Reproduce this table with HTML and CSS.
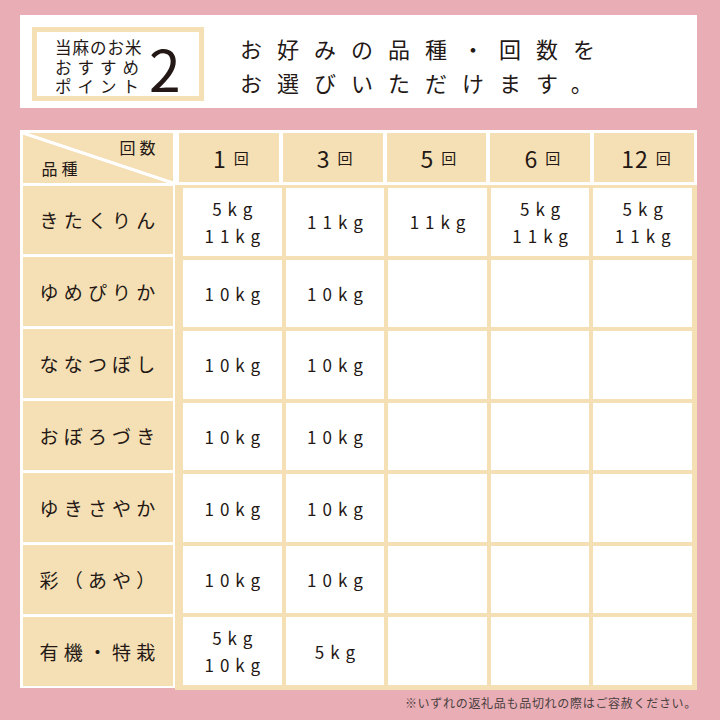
FILE: index.html
```html
<!DOCTYPE html>
<html lang="ja">
<head>
<meta charset="utf-8">
<title>当麻のお米 おすすめポイント2</title>
<link rel="stylesheet" href="styles.css">
</head>
<body>
<div class="page">
  <header class="hero">
    <div class="badge">
      <div class="badge-text">
        <span class="bl bl1">当麻のお米</span>
        <span class="bl bl2">おすすめ</span>
        <span class="bl bl3">ポイント</span>
      </div>
      <span class="badge-num">2</span>
    </div>
    <h1 class="title">お好みの品種・回数を<br>お選びいただけます。</h1>
  </header>

  <div class="table">
    <div class="labels">
      <div class="corner"><span class="c-top">回数</span><span class="c-bot">品種</span></div>
      <div class="label">きたくりん</div>
      <div class="label">ゆめぴりか</div>
      <div class="label">ななつぼし</div>
      <div class="label">おぼろづき</div>
      <div class="label">ゆきさやか</div>
      <div class="label">彩（あや）</div>
      <div class="label">有機・特栽</div>
    </div>
    <div class="main">
      <div class="head">
        <div class="hcell"><span class="n">1</span><span class="k">回</span></div>
        <div class="hcell"><span class="n">3</span><span class="k">回</span></div>
        <div class="hcell"><span class="n">5</span><span class="k">回</span></div>
        <div class="hcell"><span class="n">6</span><span class="k">回</span></div>
        <div class="hcell"><span class="n">12</span><span class="k">回</span></div>
      </div>
      <div class="grid">
        <div class="cell">5kg<br>11kg</div>
        <div class="cell">11kg</div>
        <div class="cell">11kg</div>
        <div class="cell">5kg<br>11kg</div>
        <div class="cell">5kg<br>11kg</div>

        <div class="cell">10kg</div>
        <div class="cell">10kg</div>
        <div class="cell"></div>
        <div class="cell"></div>
        <div class="cell"></div>

        <div class="cell">10kg</div>
        <div class="cell">10kg</div>
        <div class="cell"></div>
        <div class="cell"></div>
        <div class="cell"></div>

        <div class="cell">10kg</div>
        <div class="cell">10kg</div>
        <div class="cell"></div>
        <div class="cell"></div>
        <div class="cell"></div>

        <div class="cell">10kg</div>
        <div class="cell">10kg</div>
        <div class="cell"></div>
        <div class="cell"></div>
        <div class="cell"></div>

        <div class="cell">10kg</div>
        <div class="cell">10kg</div>
        <div class="cell"></div>
        <div class="cell"></div>
        <div class="cell"></div>

        <div class="cell">5kg<br>10kg</div>
        <div class="cell">5kg</div>
        <div class="cell"></div>
        <div class="cell"></div>
        <div class="cell"></div>
      </div>
    </div>
  </div>

  <p class="note">※いずれの返礼品も品切れの際はご容赦ください。</p>
</div>
</body>
</html>
```

FILE: styles.css
```css
* {
  box-sizing: border-box;
}

html, body {
  margin: 0;
  padding: 0;
}

body {
  width: 720px;
  height: 720px;
  overflow: hidden;
  background: #e9adb5;
  color: #231815;
  font-family: "Noto Sans CJK JP", "Noto Sans", sans-serif;
}

.page {
  padding: 15px 23px 0 20px;
}

/* ---------- hero ---------- */
.hero {
  height: 93px;
  background: #ffffff;
  display: flex;
  align-items: flex-start;
  padding: 12px 0 0 12px;
}

.badge {
  width: 172px;
  height: 74px;
  border: 5px solid #f5dfb4;
  display: flex;
  align-items: flex-start;
  padding: 6px 0 0 18px;
}

.badge-text {
  display: flex;
  flex-direction: column;
  width: 88px;
}

.bl {
  display: block;
  font-size: 16.5px;
  line-height: 19.5px;
  white-space: nowrap;
}

.bl1 { letter-spacing: 1px; }
.bl2 { letter-spacing: 6px; }
.bl3 { letter-spacing: 6px; }

.badge-num {
  font-size: 57px;
  line-height: 58px;
  margin-left: 6px;
  font-weight: 400;
}

.title {
  margin: 4px 0 0 36px;
  font-size: 22px;
  font-weight: 400;
  line-height: 34px;
  letter-spacing: 15px;
  white-space: nowrap;
}

/* ---------- table ---------- */
.table {
  margin-top: 22px;
  height: 560px;
  display: flex;
  align-items: flex-start;
}

.labels {
  width: 155px;
  height: 558px;
  background: #ffffff;
  padding: 2.5px;
  display: flex;
  flex-direction: column;
  gap: 3px;
}

.corner {
  height: 50px;
  flex: none;
  background:
    linear-gradient(to top right,
      transparent calc(50% - 2px),
      #ffffff calc(50% - 1.2px),
      #ffffff calc(50% + 1.2px),
      transparent calc(50% + 2px)),
    #f5dfb4;
  display: flex;
  flex-direction: column;
  justify-content: space-between;
  padding: 4px 13px 5px 19px;
  font-size: 16px;
  line-height: 20px;
  letter-spacing: 4px;
}

.c-top {
  align-self: flex-end;
}

.c-bot {
  align-self: flex-start;
}

.label {
  flex: 1;
  background: #f5dfb4;
  display: flex;
  align-items: center;
  justify-content: center;
  padding-left: 5px;
  font-size: 19px;
  letter-spacing: 5.2px;
  white-space: nowrap;
}

.main {
  flex: 1;
  height: 560px;
  display: flex;
  flex-direction: column;
}

.head {
  height: 55px;
  flex: none;
  background: #ffffff;
  padding: 3px 3px 3px 4px;
  display: grid;
  grid-template-columns: repeat(5, 1fr);
  gap: 4px;
}

.hcell {
  background: #f5dfb4;
  display: flex;
  align-items: center;
  justify-content: center;
  padding-left: 4px;
}

.hcell .n {
  font-size: 23px;
  letter-spacing: 1px;
}

.hcell .k {
  font-size: 15px;
  margin-left: 7px;
}

.grid {
  flex: 1;
  background: #f5dfb4;
  padding: 3px 5px 5px 8px;
  display: grid;
  grid-template-columns: repeat(5, 1fr);
  grid-template-rows: repeat(7, 1fr);
  gap: 4px;
}

.cell {
  background: #ffffff;
  display: flex;
  align-items: center;
  justify-content: center;
  text-align: center;
  padding-left: 6px;
  font-size: 17px;
  line-height: 27px;
  letter-spacing: 6px;
}

.note {
  margin: 4px 0 0;
  text-align: right;
  font-size: 12px;
  line-height: 17px;
  letter-spacing: 0.7px;
  color: #4a3f3f;
  white-space: nowrap;
}
```
